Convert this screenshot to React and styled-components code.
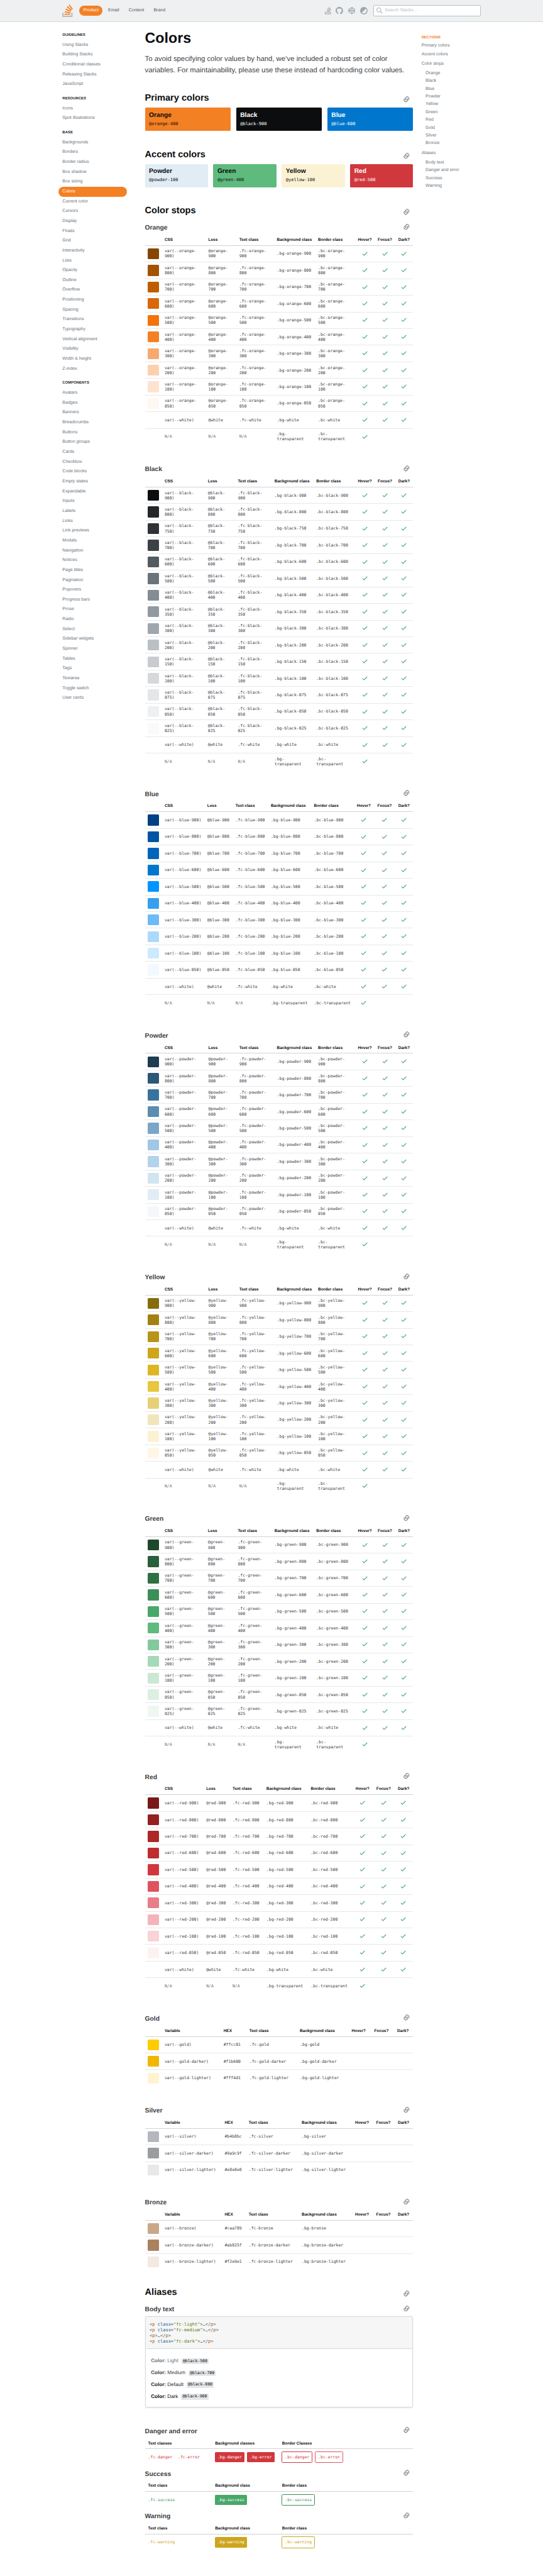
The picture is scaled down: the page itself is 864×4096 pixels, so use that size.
import React from "react";
import styled, { createGlobalStyle, css } from "styled-components";

const SANS = '"Liberation Sans", Arial, sans-serif';
const MONO = '"DejaVu Sans Mono", "Liberation Mono", monospace';
const LEFT = 427;
const RIGHT = 1217.5;

const Global = createGlobalStyle`
  * { box-sizing: border-box; }
  html { background: #fff; }
  body { margin: 0; font-family: ${SANS}; color: #242729; text-rendering: geometricPrecision; overflow: hidden; }
  h1, h2, h3, p, ul { margin: 0; padding: 0; }
  ul { list-style: none; }
  svg { display: block; flex: none; }
`;

const Page = styled.div`
  zoom: 0.54;
  width: 1600px;
  height: 7585px;
`;

/* ---------- top bar ---------- */

const TopBar = styled.header`
  height: 64px;
  background: #eff0f1;
  border-bottom: 1px solid #d6d9dc;
  padding: 0 184px;
  display: flex;
  align-items: center;
`;
const Logo = styled.a`
  margin-right: 19px;
`;
const TopNav = styled.nav`
  display: flex;
  gap: 4px;
  flex: 1;
`;
const TopLink = styled.a`
  height: 29px;
  line-height: 29px;
  padding: 0 12px;
  border-radius: 1000px;
  font-size: 13px;
  color: ${(p) => (p.$active ? "#fff" : "#535a60")};
  background: ${(p) => (p.$active ? "#f48024" : "transparent")};
`;
const IconRow = styled.div`
  display: flex;
  align-items: center;
  gap: 14px;
  color: #9fa6ad;
  margin-right: 17px;
`;
const Search = styled.div`
  width: 316px;
  height: 33px;
  border: 1px solid #bbc0c4;
  border-radius: 4px;
  background: #fff;
  display: flex;
  align-items: center;
  gap: 6px;
  padding-left: 8px;
  font-size: 13px;
  color: #bbc0c4;
`;

/* ---------- columns ---------- */

const Columns = styled.div`
  display: flex;
  align-items: flex-start;
`;
const Sidebar = styled.nav`
  width: 203px;
  margin: 12px 52px 0 172px;
`;
const GroupLabel = styled.div`
  height: 42px;
  padding: 20px 12px 0;
  line-height: 17px;
  font-size: 11px;
  font-weight: 700;
  text-transform: uppercase;
  color: #242729;
`;
const SideLink = styled.a`
  display: block;
  height: 29px;
  line-height: 29px;
  padding: 0 12px;
  border-radius: 1000px;
  font-size: 13px;
  color: ${(p) => (p.$active ? "#fff" : "#6a737c")};
  background: ${(p) => (p.$active ? "#f48024" : "transparent")};
`;
const Main = styled.main`
  width: ${RIGHT - LEFT}px;
`;
const Toc = styled.aside`
  margin: 37px 0 0 24.5px;
  width: 174px;
  font-size: 13px;
  color: #6a737c;
`;
const TocLabel = styled.div`
  height: 21px;
  line-height: 20px;
  font-size: 11px;
  font-weight: 700;
  color: #f48024;
`;
const TocItem = styled.li`
  line-height: 27px;
`;
const TocSub = styled.ul`
  padding: 2px 0 4px 12px;
`;
const TocSubItem = styled.li`
  line-height: 23px;
`;

/* ---------- headings ---------- */

const Title = styled.h1`
  margin-top: 24px;
  font-size: 43px;
  line-height: 48px;
  font-weight: 700;
  color: #0c0d0e;
`;
const Intro = styled.p`
  margin-top: 24px;
  height: 113px;
  font-size: 21px;
  line-height: 33px;
  white-space: nowrap;
  color: #3c4146;
`;
const H2Row = styled.div`
  height: 36px;
  display: flex;
  justify-content: space-between;
  padding-right: 10.5px;
  color: #6a737c;
  svg { margin-top: 11px; }
`;
const H2 = styled.h2`
  font-size: 27px;
  line-height: 36px;
  font-weight: 700;
  color: #0c0d0e;
`;
const H3Row = styled.div`
  height: 31px;
  display: flex;
  justify-content: space-between;
  padding-right: 10.5px;
  color: #6a737c;
  svg { margin-top: -1px; }
`;
const H3 = styled.h3`
  font-size: 19px;
  line-height: 26px;
  font-weight: 700;
  color: #3c4146;
`;

/* ---------- colour cards ---------- */

const Cards = styled.div`
  display: grid;
  grid-template-columns: repeat(${(p) => p.$count}, 1fr);
  gap: 16px;
  margin: 8px 0 52.6px;
`;
const Card = styled.div`
  height: 69px;
  padding: 12px;
  border-radius: 3px;
  background: ${(p) => p.$bg};
  color: ${(p) => (p.$light ? "#fff" : "#0c0d0e")};
`;
const CardName = styled.div`
  font-size: 19px;
  line-height: 24px;
  font-weight: 700;
`;
const CardCode = styled.div`
  font: 13px/22px ${MONO};
`;

/* ---------- tables ---------- */

const Section = styled.section`
  margin-bottom: ${(p) => p.$gap}px;
`;
const gridRow = css`
  display: grid;
  grid-template-columns: ${(p) => p.$cols};
  align-items: center;
`;
const HeadRow = styled.div`
  ${gridRow}
  height: 33px;
  border-bottom: 1px solid #d0d3d6;
  font-size: 12px;
  font-weight: 700;
  color: #0c0d0e;
  white-space: nowrap;
`;
const Row = styled.div`
  ${gridRow}
  height: 49px;
  border-bottom: 1px solid ${(p) => (p.$last ? "transparent" : "#e6e8ea")};
`;
const Centered = styled.div`
  display: flex;
  justify-content: center;
  color: #48a868;
`;
const HeadLabel = styled.span`
  text-align: center;
`;
const Swatch = styled.div`
  width: 32px;
  height: 32px;
  margin-left: 9px;
  border-radius: 3px;
  background: ${(p) => p.$bg};
`;
const Code = styled.div`
  font: 12px/15px ${MONO};
  text-rendering: auto;
  white-space: pre;
  color: ${(p) => (p.$muted ? "#6a737c" : "#3c4146")};
`;

/* ---------- aliases ---------- */

const Preview = styled.div`
  height: 267px;
  margin: 1px 0 60px;
  border: 1px solid #d6d9dc;
  border-radius: 4px;
  box-shadow: 0 1px 4px rgba(12, 13, 14, 0.1);
  overflow: hidden;
`;
const Source = styled.pre`
  margin: 0;
  height: 94px;
  padding: 12px;
  background: #f6f6f6;
  border-bottom: 1px solid #d6d9dc;
  font: 13px/17px ${MONO};
  color: #535a60;
  i { font-style: normal; color: #b75301; }
  b { font-weight: 400; color: #015692; }
  u { text-decoration: none; color: #54790d; }
`;
const Samples = styled.div`
  padding: 17px 16px;
`;
const Sample = styled.p`
  height: 35px;
  display: flex;
  align-items: center;
  font-size: 15px;
  color: ${(p) => p.$color};
  white-space: pre;
`;
const Tag = styled.code`
  margin: 3px 0 0 5px;
  padding: 0 4px;
  border-radius: 3px;
  background: #e4e6e8;
  font: 12px/18px ${MONO};
  color: #0c0d0e;
`;
const ChipGroup = styled.div`
  display: flex;
  align-items: center;
  gap: ${(p) => (p.$plain ? 16 : 7)}px;
  padding-left: ${(p) => (p.$plain ? 9 : 8)}px;
`;
const HeadCell = styled.div`
  padding-left: 9px;
`;
const Chip = styled.code`
  font: 12px/30px ${MONO};
  color: ${(p) => p.$color};
  ${(p) => p.$bg && css`background: ${p.$bg}; padding: 0 8px; border-radius: 3px;`}
  ${(p) => p.$border && css`border: 1px solid ${p.$border}; padding: 0 7.5px; border-radius: 3px;`}
`;

/* ---------- icons ---------- */

const StackLogo = () => (
  <svg width="31" height="38" viewBox="0 0 31 38">
    <path d="M26.500 33.500V24.500h4V37.500H0V24.500h4v9z" fill="#bcbbbb" />
    <path d="M7 23l16.400 3.450.7-3.300L7.700 19.700zM9.100 15.100l15.200 7.100 1.400-3.100L10.500 12zM13.300 7.700l12.900 10.700 2.200-2.600L15.500 5.100zM21.600 0l-2.700 2 10 13.400 2.700-2zM6.700 30.700h16.800v-3.300H6.700z" fill="#f48024" />
  </svg>
);
const StackGlyph = () => (
  <svg width="18" height="22" viewBox="0 0 31 38" fill="currentColor">
    <path d="M27 34V24h3.400v13.400H0V24h3.400v10z" />
    <path d="M7 23l16.400 3.450.7-3.300L7.700 19.700zM9.100 15.100l15.200 7.100 1.400-3.100L10.500 12zM13.300 7.700l12.900 10.700 2.200-2.600L15.500 5.100zM21.600 0l-2.700 2 10 13.400 2.700-2zM6.700 30.700h16.800v-3.300H6.700z" />
  </svg>
);
const Github = () => (
  <svg width="22" height="22" viewBox="0 0 16 16" fill="currentColor">
    <path d="M8 0C3.580 0 0 3.580 0 8c0 3.540 2.290 6.530 5.470 7.590.4.070.55-.17.55-.38 0-.19-.01-.82-.01-1.490-2.010.37-2.530-.49-2.690-.94-.09-.23-.48-.94-.82-1.130-.28-.15-.68-.52-.01-.53.63-.01 1.080.58 1.230.82.72 1.210 1.870.87 2.330.66.07-.52.28-.87.51-1.070-1.780-.2-3.640-.89-3.640-3.950 0-.87.31-1.590.82-2.150-.08-.2-.36-1.020.08-2.120 0 0 .67-.21 2.200.82.64-.18 1.320-.27 2-.27s1.360.09 2 .27c1.530-1.040 2.200-.82 2.200-.82.44 1.100.16 1.920.08 2.120.51.56.82 1.270.82 2.150 0 3.070-1.870 3.750-3.650 3.950.29.25.54.73.54 1.480 0 1.070-.01 1.930-.01 2.200 0 .21.15.46.55.38A8.010 8.010 0 0016 8c0-4.420-3.580-8-8-8z" />
  </svg>
);
const Codepen = () => (
  <svg width="22" height="22" viewBox="0 0 24 24" fill="none" stroke="currentColor" strokeWidth="2.200" strokeLinejoin="round">
    <path d="M12 1.500l10.500 7v7L12 22.500l-10.500-7v-7zM12 22.500v-7M22.500 8.500L12 15.500 1.500 8.500M1.500 15.500L12 8.500l10.500 7M12 1.500v7" />
  </svg>
);
const Contrast = () => (
  <svg width="22" height="22" viewBox="0 0 22 22">
    <circle cx="11" cy="11" r="11" fill="currentColor" />
    <path d="M17 5A8.500 8.500 0 015 17z" fill="#eff0f1" />
  </svg>
);
const SearchIcon = () => (
  <svg width="18" height="18" viewBox="0 0 18 18" fill="#aeb4b9">
    <path d="M18 16.500l-5.140-5.180h-.35a7 7 0 10-1.190 1.190v.35L16.500 18l1.500-1.500zM12 7A5 5 0 112 7a5 5 0 0110 0z" />
  </svg>
);
const LinkIcon = () => (
  <svg width="18" height="18" viewBox="0 0 18 18" fill="currentColor">
    <path d="M7.220 11.830a6 6 0 001.620.85l.61-1.800a4.100 4.100 0 114.040-.8l1.260 1.420a6 6 0 10-7.530.33zm3.430-5.600a6 6 0 00-1.600-.87L8.400 7.150a4.100 4.100 0 11-4.050.73L3.120 6.430a6 6 0 107.530-.2z" />
  </svg>
);
const Check = () => (
  <svg width="18" height="18" viewBox="0 0 18 18" fill="currentColor">
    <path d="M16 4.410L14.590 3 6 11.590 2.410 8 1 9.410l5 5z" />
  </svg>
);

/* ---------- data ---------- */

const NAV = [
  ["Guidelines", "Using Stacks|Building Stacks|Conditional classes|Releasing Stacks|JavaScript"],
  ["Resources", "Icons|Spot illustrations"],
  ["Base", "Backgrounds|Borders|Border radius|Box shadow|Box sizing|Colors|Current color|Cursors|Display|Floats|Grid|Interactivity|Lists|Opacity|Outline|Overflow|Positioning|Spacing|Transitions|Typography|Vertical alignment|Visibility|Width & height|Z-index"],
  ["Components", "Avatars|Badges|Banners|Breadcrumbs|Buttons|Button groups|Cards|Checkbox|Code blocks|Empty states|Expandable|Inputs|Labels|Links|Link previews|Modals|Navigation|Notices|Page titles|Pagination|Popovers|Progress bars|Prose|Radio|Select|Sidebar widgets|Spinner|Tables|Tags|Textarea|Toggle switch|User cards"],
];
const STOP_NAMES = ["Orange", "Black", "Blue", "Powder", "Yellow", "Green", "Red"];
const TOC = [
  ["Primary colors"],
  ["Accent colors"],
  ["Color stops", [...STOP_NAMES, "Gold", "Silver", "Bronze"]],
  ["Aliases", ["Body text", "Danger and error", "Success", "Warning"]],
];

// Text column starts, then the centres of the three check columns.
const columns = (starts, centers) => {
  const [hover, focus, dark] = centers;
  const darkStart = 2 * dark - RIGHT;
  const focusStart = 2 * focus - darkStart;
  const hoverStart = 2 * hover - focusStart;
  const edges = [LEFT, ...starts, hoverStart, focusStart, darkStart, RIGHT];
  return edges.slice(1).map((e, i) => `${(e - edges[i]).toFixed(1)}px`).join(" ");
};
const WIDE = columns([485, 614, 705, 816, 937.2], [1075.3, 1134.4, 1190.9]);
const MEDIUM = columns([485, 612.7, 700.8, 809, 932], [1075.3, 1134.4, 1190.9]);
const MEDALS = columns([485, 662, 733, 889], [1067, 1129.7, 1189.3]);

const STOPS = [
  { name: "Orange", cols: WIDE, wrap: [1, 1, 1, 0, 1], colors: { 900: "#874600", 800: "#a35200", 700: "#bd5c00", 600: "#da670b", 500: "#f2720c", 400: "#f48024", 300: "#f6aa6f", 200: "#fcd0ad", 100: "#fee3cf", "050": "#fff7f2" } },
  { name: "Black", cols: MEDIUM, wrap: [1, 1, 1, 0, 0], colors: { 900: "#0c0d0e", 800: "#242729", 750: "#2f3337", 700: "#3c4146", 600: "#535a60", 500: "#6a737c", 400: "#848d95", 350: "#9199a1", 300: "#9fa6ad", 200: "#bbc0c4", 150: "#c8ccd0", 100: "#d6d9dc", "075": "#e4e6e8", "050": "#eff0f1", "025": "#fafafb" } },
  { name: "Blue", cols: columns([485, 610.8, 694, 798, 925.2], [1072.1, 1133.6, 1190.6]), wrap: [0, 0, 0, 0, 0], inline: true, colors: { 900: "#004085", 800: "#0054a3", 700: "#0064bd", 600: "#0077cc", 500: "#0095ff", 400: "#379fef", 300: "#6cbbf7", 200: "#addafc", 100: "#cde9fe", "050": "#f2f9ff" } },
  { name: "Powder", cols: WIDE, wrap: [1, 1, 1, 0, 1], colors: { 900: "#1e3c52", 800: "#2c5777", 700: "#39739d", 600: "#5b8db1", 500: "#7aa7c7", 400: "#a0c7e4", 300: "#b3d3ea", 200: "#d1e5f1", 100: "#e1ecf4", "050": "#f4f8fb" } },
  { name: "Yellow", cols: WIDE, wrap: [1, 1, 1, 0, 1], colors: { 900: "#866c0d", 800: "#a28013", 700: "#b89516", 600: "#cea51b", 500: "#ddb624", 400: "#e9c63f", 300: "#e6d178", 200: "#f1e5bc", 100: "#fbf2d4", "050": "#fff7e5" } },
  { name: "Green", cols: MEDIUM, wrap: [1, 1, 1, 0, 0], colors: { 900: "#1e472c", 800: "#28603c", 700: "#2f6f44", 600: "#3d8f58", 500: "#48a868", 400: "#5eba7d", 300: "#82ca9c", 200: "#a6d9b7", 100: "#cae8d4", "050": "#dcf0e2", "025": "#eef8f1" } },
  { name: "Red", cols: columns([485, 607.7, 685.1, 785, 915.8], [1068.5, 1130.5, 1189.6]), wrap: [0, 0, 0, 0, 0], inline: true, colors: { 900: "#7a1819", 800: "#942121", 700: "#ac2726", 600: "#c02d2e", 500: "#d1383d", 400: "#de535e", 300: "#e87c87", 200: "#f4b4bb", 100: "#f9d3d7", "050": "#fdf2f2" } },
];
const METALS = [
  { name: "Gold", cols: columns([485, 658.7, 734.8, 883.6], [1057, 1124, 1187.7]), hex: ["#ffcc01", "#f1b600", "#fff4d1"] },
  { name: "Silver", cols: MEDALS, hex: ["#b4b8bc", "#9a9c9f", "#e8e8e8"] },
  { name: "Bronze", cols: MEDALS, hex: ["#caa789", "#ab825f", "#f2e9e1"] },
];

const breakStop = (text, on) => (on ? text.replace(/-(?=[^-]*$)/, "-\n") : text);

/* ---------- parts ---------- */

const Heading2 = ({ children }) => <H2Row><H2>{children}</H2><LinkIcon /></H2Row>;
const Heading3 = ({ children }) => <H3Row><H3>{children}</H3><LinkIcon /></H3Row>;

const Head = ({ cols, labels }) => (
  <HeadRow $cols={cols}>
    <span />
    {labels.map((l) => <span key={l}>{l}</span>)}
    {["Hover?", "Focus?", "Dark?"].map((l) => <HeadLabel key={l}>{l}</HeadLabel>)}
  </HeadRow>
);
const Checks = ({ count = 3 }) => Array.from({ length: count }, (_, i) => <Centered key={i}><Check /></Centered>);

const StopTable = ({ name, cols, wrap, inline, colors }) => {
  const id = name.toLowerCase();
  const stops = Object.keys(colors).sort((a, b) => Number(b) - Number(a));
  return (
    <Section $gap={59.6}>
      <Heading3>{name}</Heading3>
      <Head cols={cols} labels={["CSS", "Less", "Text class", "Background class", "Border class"]} />
      {stops.map((s) => (
        <Row key={s} $cols={cols}>
          <Swatch $bg={colors[s]} />
          {[`var(--${id}-${s})`, `@${id}-${s}`, `.fc-${id}-${s}`, `.bg-${id}-${s}`, `.bc-${id}-${s}`].map((t, i) => (
            <Code key={t}>{breakStop(t, wrap[i])}</Code>
          ))}
          <Checks />
        </Row>
      ))}
      <Row $cols={cols}>
        <Swatch $bg="#fff" />
        {["var(--white)", "@white", ".fc-white", ".bg-white", ".bc-white"].map((t) => <Code key={t}>{t}</Code>)}
        <Checks />
      </Row>
      <Row $cols={cols} $last>
        <span />
        <Code $muted>N/A</Code>
        <Code $muted>N/A</Code>
        <Code $muted>N/A</Code>
        <Code>{breakStop(".bg-transparent", !inline)}</Code>
        <Code>{breakStop(".bc-transparent", !inline)}</Code>
        <Checks count={1} />
      </Row>
    </Section>
  );
};

const MetalTable = ({ name, cols, hex, last }) => {
  const id = name.toLowerCase();
  return (
    <Section $gap={last ? 48.2 : 59.6}>
      <Heading3>{name}</Heading3>
      <Head cols={cols} labels={["Variable", "HEX", "Text class", "Background class"]} />
      {["", "-darker", "-lighter"].map((v, i) => (
        <Row key={v} $cols={cols} $last={i === 2}>
          <Swatch $bg={hex[i]} />
          <Code>{`var(--${id}${v})`}</Code>
          <Code>{hex[i]}</Code>
          <Code>{`.fc-${id}${v}`}</Code>
          <Code>{`.bg-${id}${v}`}</Code>
        </Row>
      ))}
    </Section>
  );
};

const AliasTable = ({ title, labels, names, text, fill, borders }) => (
  <Section $gap={12.4}>
    <Heading3>{title}</Heading3>
    <HeadRow $cols="repeat(4, 1fr)">
      {labels.map((l) => <HeadCell key={l}>{l}</HeadCell>)}
    </HeadRow>
    <Row $cols="repeat(4, 1fr)" $last>
      <ChipGroup $plain>{names.map((n) => <Chip key={n} $color={text}>.fc-{n}</Chip>)}</ChipGroup>
      <ChipGroup>{names.map((n) => <Chip key={n} $color="#fff" $bg={fill}>.bg-{n}</Chip>)}</ChipGroup>
      <ChipGroup>{names.map((n, i) => <Chip key={n} $color={text} $border={borders[i]}>.bc-{n}</Chip>)}</ChipGroup>
    </Row>
  </Section>
);

const SourceLine = ({ cls }) => (
  <>{"<"}<i>p</i>{cls && <> <b>class</b>=<u>"{cls}"</u></>}{">…</"}<i>p</i>{">\n"}</>
);

export default function App() {
  return (
    <Page>
      <Global />
      <TopBar>
        <Logo><StackLogo /></Logo>
        <TopNav>
          <TopLink $active>Product</TopLink>
          <TopLink>Email</TopLink>
          <TopLink>Content</TopLink>
          <TopLink>Brand</TopLink>
        </TopNav>
        <IconRow><StackGlyph /><Github /><Codepen /><Contrast /></IconRow>
        <Search><SearchIcon />Search Stacks…</Search>
      </TopBar>
      <Columns>
        <Sidebar>
          {NAV.map(([label, items]) => (
            <React.Fragment key={label}>
              <GroupLabel>{label}</GroupLabel>
              {items.split("|").map((t) => <SideLink key={t} $active={t === "Colors"}>{t}</SideLink>)}
            </React.Fragment>
          ))}
        </Sidebar>
        <Main>
          <Title>Colors</Title>
          <Intro>
            To avoid specifying color values by hand, we’ve included a robust set of color<br />
            variables. For maintainability, please use these instead of hardcoding color values.
          </Intro>
          <Heading2>Primary colors</Heading2>
          <Cards $count={3}>
            <Card $bg="#f48024"><CardName>Orange</CardName><CardCode>@orange-400</CardCode></Card>
            <Card $bg="#0c0d0e" $light><CardName>Black</CardName><CardCode>@black-900</CardCode></Card>
            <Card $bg="#0077cc" $light><CardName>Blue</CardName><CardCode>@blue-600</CardCode></Card>
          </Cards>
          <Heading2>Accent colors</Heading2>
          <Cards $count={4}>
            <Card $bg="#e1ecf4"><CardName>Powder</CardName><CardCode>@powder-100</CardCode></Card>
            <Card $bg="#5eba7d"><CardName>Green</CardName><CardCode>@green-400</CardCode></Card>
            <Card $bg="#fbf2d4"><CardName>Yellow</CardName><CardCode>@yellow-100</CardCode></Card>
            <Card $bg="#d1383d" $light><CardName>Red</CardName><CardCode>@red-500</CardCode></Card>
          </Cards>
          <Section $gap={19.6}><Heading2>Color stops</Heading2></Section>
          {STOPS.map((s) => <StopTable key={s.name} {...s} />)}
          {METALS.map((m, i) => <MetalTable key={m.name} {...m} last={i === 2} />)}
          <Section $gap={19.6}><Heading2>Aliases</Heading2></Section>
          <Heading3>Body text</Heading3>
          <Preview>
            <Source>
              <SourceLine cls="fc-light" />
              <SourceLine cls="fc-medium" />
              <SourceLine />
              <SourceLine cls="fc-dark" />
            </Source>
            <Samples>
              <Sample $color="#6a737c"><b>Color:</b> Light <Tag>@black-500</Tag></Sample>
              <Sample $color="#3c4146"><b>Color:</b> Medium <Tag>@black-700</Tag></Sample>
              <Sample $color="#242729"><b>Color:</b> Default <Tag>@black-800</Tag></Sample>
              <Sample $color="#0c0d0e"><b>Color:</b> Dark <Tag>@black-900</Tag></Sample>
            </Samples>
          </Preview>
          <AliasTable title="Danger and error" labels={["Text classes", "Background classes", "Border Classes"]} names={["danger", "error"]} text="#d1383d" fill="#d1383d" borders={["#d1383d", "#de535e"]} />
          <AliasTable title="Success" labels={["Text class", "Background class", "Border class"]} names={["success"]} text="#3d8f58" fill="#48a868" borders={["#3d8f58"]} />
          <AliasTable title="Warning" labels={["Text class", "Background class", "Border class"]} names={["warning"]} text="#cea51b" fill="#cea51b" borders={["#cea51b"]} />
        </Main>
        <Toc>
          <TocLabel>SECTIONS</TocLabel>
          <ul>
            {TOC.map(([label, sub]) => (
              <TocItem key={label}>
                {label}
                {sub && <TocSub>{sub.map((s) => <TocSubItem key={s}>{s}</TocSubItem>)}</TocSub>}
              </TocItem>
            ))}
          </ul>
        </Toc>
      </Columns>
    </Page>
  );
}
